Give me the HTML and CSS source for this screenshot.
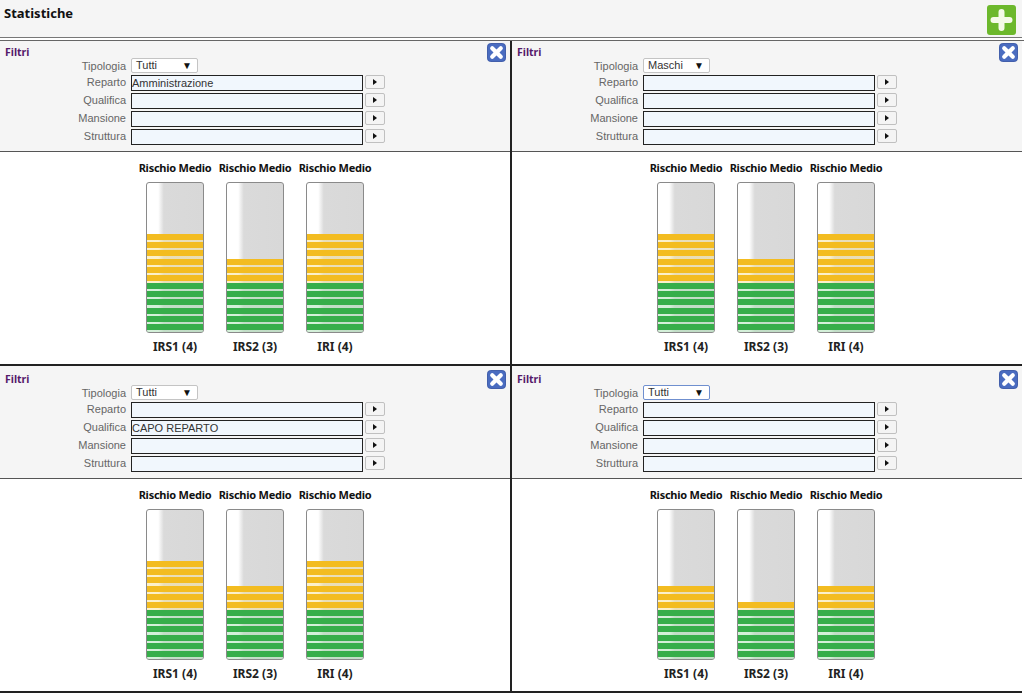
FILE: index.html
```html
<!DOCTYPE html>
<html lang="it">
  <head>
    <meta charset="UTF-8" />
    <title>Statistiche</title>
    <link rel="stylesheet" href="styles.css">
  </head>
  <body>
    <svg width="0" height="0" class="defs">
      <symbol id="ico-close" viewBox="0 0 20 20">
        <rect x="0.5" y="0.5" width="19" height="19" rx="3.5" fill="#4a6cc0" stroke="#3c5aa8" />
        <path d="M5.5 5.5 L14.5 14.5 M14.5 5.5 L5.5 14.5" stroke="#fff" stroke-width="4.4" stroke-linecap="round" />
      </symbol>
    </svg>

    <div class="header">
      <h1>Statistiche</h1>
      <svg class="add" viewBox="0 0 29 30" width="29" height="30">
        <rect width="29" height="30" rx="3" fill="#6cb82c" />
        <path d="M14.5 7 V23 M6.5 15 H22.5" stroke="#f4fae8" stroke-width="6" stroke-linecap="round" />
      </svg>
    </div>

    <div class="grid">
      <div class="panel">
        <div class="filters">
          <span class="filters-title">Filtri</span>
          <svg class="close" width="19" height="19"><use href="#ico-close" /></svg>
          <div class="form">
            <label class="first">Tipologia</label>
            <div class="select"><span>Tutti</span><i>▼</i></div>
            <label>Reparto</label>
            <div class="input">Amministrazione</div>
            <div class="go"><i></i></div>
            <label>Qualifica</label>
            <div class="input"></div>
            <div class="go"><i></i></div>
            <label>Mansione</label>
            <div class="input"></div>
            <div class="go"><i></i></div>
            <label>Struttura</label>
            <div class="input"></div>
            <div class="go"><i></i></div>
          </div>
        </div>
        <div class="charts">
          <div class="chart">
            <div class="chart-title">Rischio Medio</div>
            <div class="bar"><div class="fill yellow l6"></div><div class="fill green l6"></div></div>
            <div class="chart-label">IRS1 (4)</div>
          </div>
          <div class="chart">
            <div class="chart-title">Rischio Medio</div>
            <div class="bar"><div class="fill yellow l3"></div><div class="fill green l6"></div></div>
            <div class="chart-label">IRS2 (3)</div>
          </div>
          <div class="chart">
            <div class="chart-title">Rischio Medio</div>
            <div class="bar"><div class="fill yellow l6"></div><div class="fill green l6"></div></div>
            <div class="chart-label">IRI (4)</div>
          </div>
        </div>
      </div>

      <div class="panel">
        <div class="filters">
          <span class="filters-title">Filtri</span>
          <svg class="close" width="19" height="19"><use href="#ico-close" /></svg>
          <div class="form">
            <label class="first">Tipologia</label>
            <div class="select"><span>Maschi</span><i>▼</i></div>
            <label>Reparto</label>
            <div class="input"></div>
            <div class="go"><i></i></div>
            <label>Qualifica</label>
            <div class="input"></div>
            <div class="go"><i></i></div>
            <label>Mansione</label>
            <div class="input"></div>
            <div class="go"><i></i></div>
            <label>Struttura</label>
            <div class="input"></div>
            <div class="go"><i></i></div>
          </div>
        </div>
        <div class="charts">
          <div class="chart">
            <div class="chart-title">Rischio Medio</div>
            <div class="bar"><div class="fill yellow l6"></div><div class="fill green l6"></div></div>
            <div class="chart-label">IRS1 (4)</div>
          </div>
          <div class="chart">
            <div class="chart-title">Rischio Medio</div>
            <div class="bar"><div class="fill yellow l3"></div><div class="fill green l6"></div></div>
            <div class="chart-label">IRS2 (3)</div>
          </div>
          <div class="chart">
            <div class="chart-title">Rischio Medio</div>
            <div class="bar"><div class="fill yellow l6"></div><div class="fill green l6"></div></div>
            <div class="chart-label">IRI (4)</div>
          </div>
        </div>
      </div>

      <div class="panel">
        <div class="filters">
          <span class="filters-title">Filtri</span>
          <svg class="close" width="19" height="19"><use href="#ico-close" /></svg>
          <div class="form">
            <label class="first">Tipologia</label>
            <div class="select"><span>Tutti</span><i>▼</i></div>
            <label>Reparto</label>
            <div class="input"></div>
            <div class="go"><i></i></div>
            <label>Qualifica</label>
            <div class="input">CAPO REPARTO</div>
            <div class="go"><i></i></div>
            <label>Mansione</label>
            <div class="input"></div>
            <div class="go"><i></i></div>
            <label>Struttura</label>
            <div class="input"></div>
            <div class="go"><i></i></div>
          </div>
        </div>
        <div class="charts">
          <div class="chart">
            <div class="chart-title">Rischio Medio</div>
            <div class="bar"><div class="fill yellow l6"></div><div class="fill green l6"></div></div>
            <div class="chart-label">IRS1 (4)</div>
          </div>
          <div class="chart">
            <div class="chart-title">Rischio Medio</div>
            <div class="bar"><div class="fill yellow l3"></div><div class="fill green l6"></div></div>
            <div class="chart-label">IRS2 (3)</div>
          </div>
          <div class="chart">
            <div class="chart-title">Rischio Medio</div>
            <div class="bar"><div class="fill yellow l6"></div><div class="fill green l6"></div></div>
            <div class="chart-label">IRI (4)</div>
          </div>
        </div>
      </div>

      <div class="panel">
        <div class="filters">
          <span class="filters-title">Filtri</span>
          <svg class="close" width="19" height="19"><use href="#ico-close" /></svg>
          <div class="form">
            <label class="first">Tipologia</label>
            <div class="select focus"><span>Tutti</span><i>▼</i></div>
            <label>Reparto</label>
            <div class="input"></div>
            <div class="go"><i></i></div>
            <label>Qualifica</label>
            <div class="input"></div>
            <div class="go"><i></i></div>
            <label>Mansione</label>
            <div class="input"></div>
            <div class="go"><i></i></div>
            <label>Struttura</label>
            <div class="input"></div>
            <div class="go"><i></i></div>
          </div>
        </div>
        <div class="charts">
          <div class="chart">
            <div class="chart-title">Rischio Medio</div>
            <div class="bar"><div class="fill yellow l3"></div><div class="fill green l6"></div></div>
            <div class="chart-label">IRS1 (4)</div>
          </div>
          <div class="chart">
            <div class="chart-title">Rischio Medio</div>
            <div class="bar"><div class="fill yellow l1"></div><div class="fill green l6"></div></div>
            <div class="chart-label">IRS2 (3)</div>
          </div>
          <div class="chart">
            <div class="chart-title">Rischio Medio</div>
            <div class="bar"><div class="fill yellow l3"></div><div class="fill green l6"></div></div>
            <div class="chart-label">IRI (4)</div>
          </div>
        </div>
      </div>
    </div>
  </body>
</html>
```

FILE: styles.css
```css
* {
  box-sizing: border-box;
  margin: 0;
  padding: 0;
}
body {
  font-family: "Liberation Sans", Arial, sans-serif;
  font-size: 11px;
  background: #fff;
  color: #000;
  width: 1024px;
  height: 693px;
  overflow: hidden;
}
.defs {
  display: block;
  height: 0;
}
.header {
  height: 38px;
  background: #f5f5f5;
  border-bottom: 1px solid #777;
  margin-right: 2px;
  padding: 5px 6px 0 4px;
  display: flex;
  justify-content: space-between;
  align-items: flex-start;
}
.header h1 {
  font-family: "Noto Sans", sans-serif;
  font-size: 13px;
  font-weight: bold;
  line-height: 16px;
  color: #111;
}
.add {
  display: block;
}
.grid {
  display: grid;
  grid-template-columns: 512px 510px;
  grid-template-rows: 325px 327px;
  margin-top: 2px;
  border-top: 1px solid #666;
}
.panel {
  border-bottom: 2px solid #222;
  display: flex;
  flex-direction: column;
}
.panel:nth-child(odd) {
  border-right: 2px solid #222;
}
.filters {
  position: relative;
  height: 111px;
  background: #f5f5f5;
  border-bottom: 1px solid #555;
  padding: 4px 0 0 5px;
}
.panel:nth-child(n+3) .filters {
  height: 113px;
  padding-top: 6px;
}
.panel:nth-child(n+3) .close {
  top: 4px;
}
.filters-title {
  display: block;
  font-family: "Noto Sans", sans-serif;
  font-size: 10.5px;
  font-weight: bold;
  line-height: 14px;
  color: #551a6b;
}
.close {
  position: absolute;
  top: 2px;
  right: 4px;
}
.form {
  display: grid;
  grid-template-columns: 121px 232px 22px;
  grid-auto-rows: 18px;
  column-gap: 5px;
  margin-top: -3px;
  align-items: center;
}
.form label {
  grid-column: 1;
  text-align: right;
  color: #666;
  font-size: 11px;
  line-height: 14px;
  margin-top: -3px;
}
.form label.first {
  margin-top: 1px;
}
.select {
  grid-column: 2 / 4;
  width: 67px;
  height: 15px;
  background: #fff;
  border: 1px solid #c4c4c4;
  border-radius: 2px;
  padding: 0 5px 0 4px;
  display: flex;
  justify-content: space-between;
  align-items: center;
  font-size: 11px;
  line-height: 13px;
  color: #333;
  margin-top: 1px;
}
.select i {
  font-style: normal;
  font-size: 10px;
  color: #111;
}
.select.focus {
  border-color: #6f8fcf;
}
.input {
  grid-column: 2;
  height: 16px;
  background: #f1f7fd;
  border: 1px solid #222;
  font-size: 11px;
  line-height: 14px;
  color: #333;
}
.go {
  grid-column: 3;
  width: 20px;
  height: 14px;
  margin-left: -3px;
  margin-top: -2px;
  background: #f4f4f4;
  border: 1px solid #c0c0c0;
  border-radius: 2px;
  display: flex;
  justify-content: center;
  align-items: center;
}
.go i {
  display: block;
  border-left: 4px solid #111;
  border-top: 3.5px solid transparent;
  border-bottom: 3.5px solid transparent;
}
.charts {
  flex: 1;
  display: grid;
  grid-template-columns: repeat(3, 80px);
  padding: 8px 0 0 135px;
}
.panel:nth-child(even) .charts {
  padding-left: 134px;
}
.chart {
  display: flex;
  flex-direction: column;
  align-items: center;
}
.chart-title {
  font-family: "Noto Sans", sans-serif;
  font-size: 11px;
  font-weight: bold;
  line-height: 16px;
  color: #111;
  white-space: nowrap;
  letter-spacing: -0.25px;
}
.chart-label {
  font-family: "Noto Sans", sans-serif;
  font-size: 12px;
  font-weight: bold;
  line-height: 16px;
  color: #222;
  margin-top: 6px;
}
.bar {
  width: 58px;
  height: 151px;
  margin-top: 6px;
  border: 1px solid #8a8a8a;
  border-radius: 3px;
  background: linear-gradient(to right, #fff 0, #fff 20%, #dadada 30%, #d8d8d8 100%);
  display: flex;
  flex-direction: column;
  justify-content: flex-end;
}
.fill {
  flex: none;
}
.yellow {
  background: repeating-linear-gradient(to bottom, #f3bc20 0, #f3bc20 6px, rgba(248, 226, 150, 0.5) 6px, rgba(248, 226, 150, 0.5) 8.17px);
}
.green {
  background: repeating-linear-gradient(to bottom, #36ae4a 0, #36ae4a 6px, rgba(170, 225, 180, 0.5) 6px, rgba(170, 225, 180, 0.5) 8.17px);
}
.l1 {
  height: 8.17px;
}
.l3 {
  height: 24.5px;
}
.l6 {
  height: 49px;
}
```
